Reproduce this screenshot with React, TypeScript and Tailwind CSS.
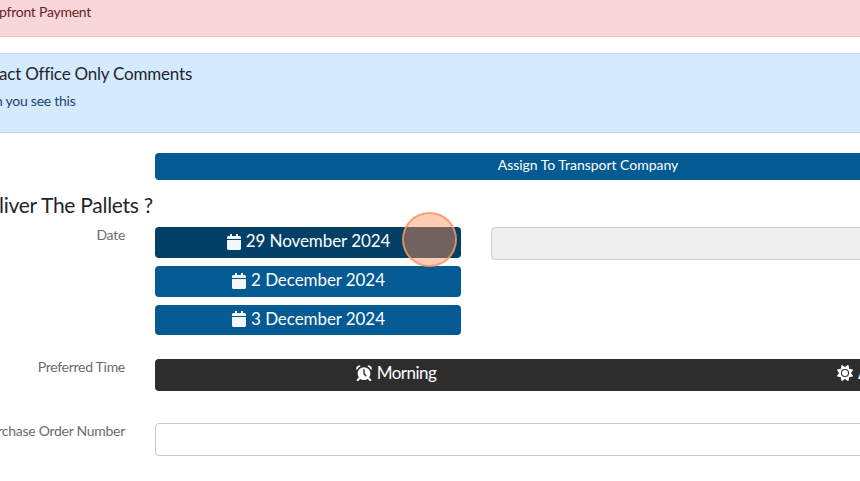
import React from 'react';
import { FaCalendar } from 'react-icons/fa';
import { FaSun } from 'react-icons/fa6';

const dates = [
  { label: '29 November 2024', className: 'h-[31px] mb-2 bg-[#034067]' },
  { label: '2 December 2024', className: 'h-[31px] mb-2 bg-[#045a92]' },
  { label: '3 December 2024', className: 'h-[30px] bg-[#045a92]' },
];

const AlarmIcon = () => (
  <svg width="16" height="16" viewBox="0 0 16 16" fill="none">
    <circle cx="8" cy="8.6" r="6.4" fill="currentColor" />
    <path
      d="M.9 4.6C-.1 2.6 1.6.4 4.3 1M15.1 4.6C16.1 2.6 14.4.4 11.7 1"
      fill="currentColor"
      stroke="currentColor"
      strokeWidth="1"
    />
    <path d="M3.6 13 1.6 15.3M12.4 13l2 2.3" stroke="currentColor" strokeWidth="2" strokeLinecap="round" />
    <path d="M8 4.8v4l1.9 2" stroke="#2d2d2d" strokeWidth="1.4" strokeLinecap="round" />
  </svg>
);

const Label = ({ children }: { children: React.ReactNode }) => (
  <div className="w-[125px] shrink-0 flex justify-end whitespace-nowrap text-[14px] leading-5 tracking-[-0.28px] text-[#6c6c6c]">
    {children}
  </div>
);

export default function App() {
  return (
    <div className="w-[860px] h-[481px] overflow-hidden bg-white font-['Lato',sans-serif] text-[#212529]">
      <div className="h-[37px] border-b border-[#ecc6cb] bg-[#f8d7da] pt-[2px]">
        <p className="-ml-px text-[14px] leading-5 tracking-[-0.25px] text-[#6b1d27]">pfront Payment</p>
      </div>

      <div className="mt-4 h-20 border-y border-[#bcd9ee] bg-[#d5eaff] pt-2">
        <h5 className="-ml-px text-[17px] leading-6 tracking-[-0.21px]">act Office Only Comments</h5>
        <p className="-ml-[5px] mt-[5px] text-[14px] leading-5 tracking-[-0.26px] text-[#1b4271]">n you see this</p>
      </div>

      <div className="ml-[155px] mt-5 flex h-[27px] w-[866px] justify-center rounded bg-[#045a92] pt-[2px] text-[14px] leading-5 tracking-[-0.03px] text-white">
        Assign To Transport Company
      </div>

      <h4 className="-ml-px mt-[11px] h-9 text-[21px] leading-7 tracking-[-0.27px]">liver The Pallets ?</h4>

      <div className="flex">
        <div className="-mt-[2px]">
          <Label>Date</Label>
        </div>
        <div className="relative ml-[30px] w-[306px] shrink-0">
          {dates.map((date) => (
            <div
              key={date.label}
              className={`flex items-center justify-center gap-1 rounded pb-[2px] text-[17px] tracking-[-0.08px] text-white ${date.className}`}
            >
              <FaCalendar size={16} className="text-[#f4f8fd]" />
              <span className="-mt-px">{date.label}</span>
            </div>
          ))}
          <div className="absolute -top-[15px] left-[247px] size-[55px] rounded-full border-2 border-[#f09a68]/80 bg-[#ff8a57]/44" />
        </div>
        <div className="ml-[30px] h-[33px] w-[500px] shrink-0 rounded border border-[#cfcfcf] bg-[#eee]" />
      </div>

      <div className="mt-6 flex">
        <div className="-mt-[2px]">
          <Label>Preferred Time</Label>
        </div>
        <div className="ml-[30px] flex h-8 w-[964px] shrink-0 rounded bg-[#2d2d2d] text-[17px] tracking-[-0.5px] text-white">
          <div className="flex w-[482px] items-center justify-center gap-[5px] pb-1">
            <AlarmIcon />
            <span>Morning</span>
          </div>
          <div className="flex items-center gap-[5px] pb-1 pl-[200px]">
            <FaSun size={16} />
            <span>Afternoon</span>
          </div>
        </div>
      </div>

      <div className="mt-8 flex">
        <div className="-mt-[2px]">
          <Label>rchase Order Number</Label>
        </div>
        <div className="ml-[30px] h-[33px] w-[866px] shrink-0 rounded border border-[#c8c8c8]" />
      </div>
    </div>
  );
}
